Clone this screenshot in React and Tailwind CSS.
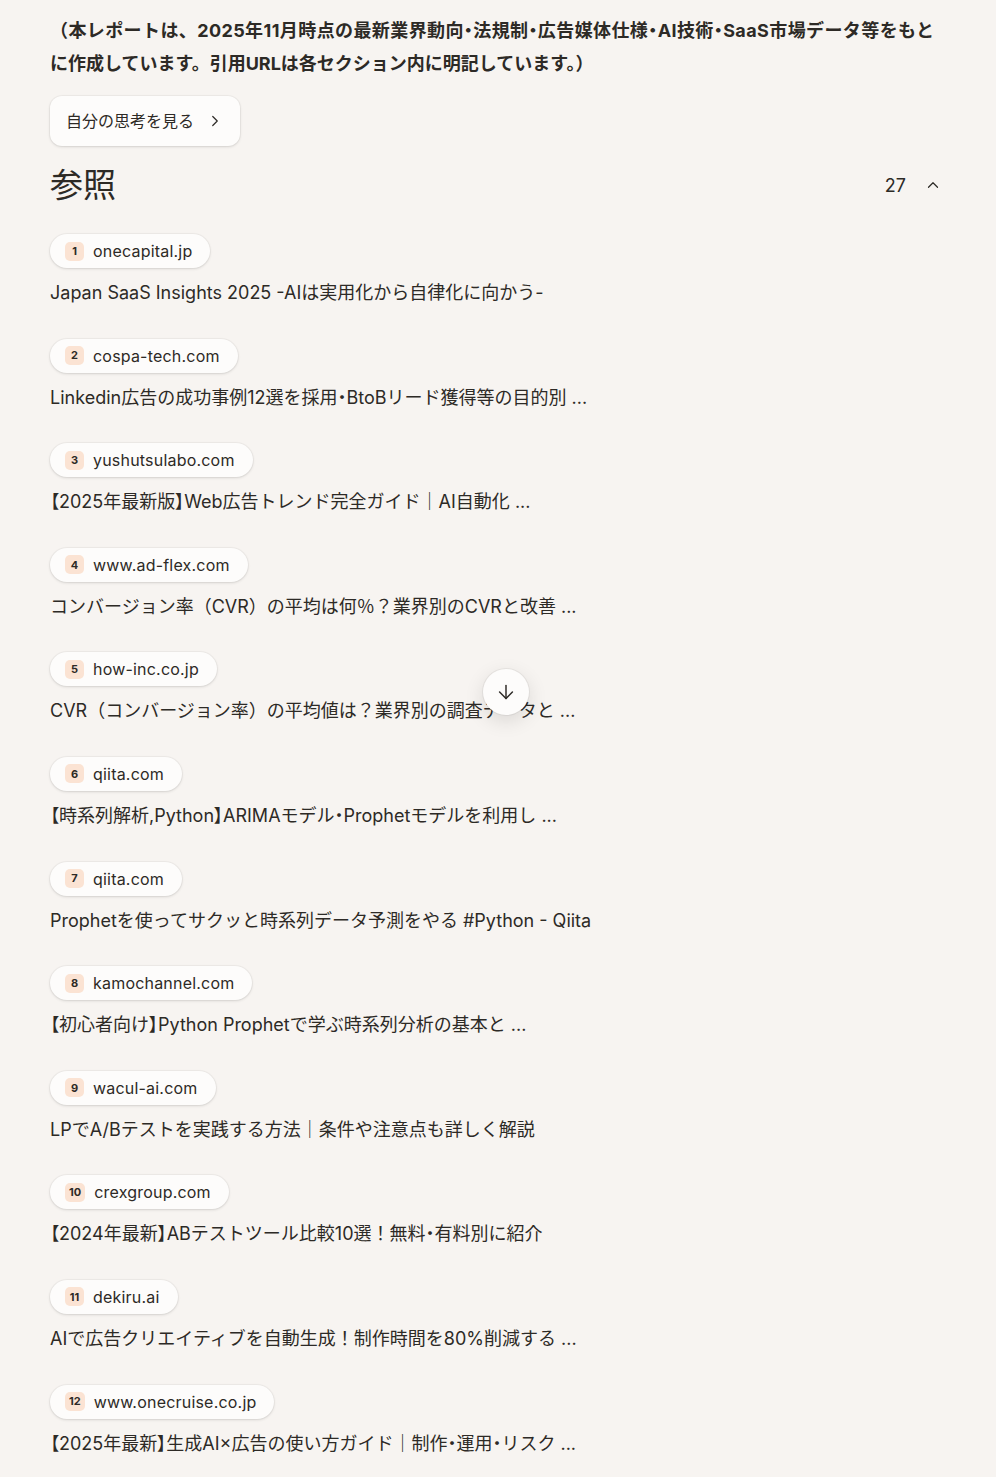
import React from "react";
import { ChevronRight, ChevronUp, ArrowDown } from "lucide-react";

const refs = [
  { n: 1, site: "onecapital.jp", title: "Japan SaaS Insights 2025 -AIは実用化から自律化に向かう-" },
  { n: 2, site: "cospa-tech.com", title: "Linkedin広告の成功事例12選を採用・BtoBリード獲得等の目的別 ..." },
  { n: 3, site: "yushutsulabo.com", title: "【2025年最新版】Web広告トレンド完全ガイド｜AI自動化 ..." },
  { n: 4, site: "www.ad-flex.com", title: "コンバージョン率（CVR）の平均は何％？業界別のCVRと改善 ..." },
  { n: 5, site: "how-inc.co.jp", title: "CVR（コンバージョン率）の平均値は？業界別の調査データと ..." },
  { n: 6, site: "qiita.com", title: "【時系列解析,Python】ARIMAモデル・Prophetモデルを利用し ..." },
  { n: 7, site: "qiita.com", title: "Prophetを使ってサクッと時系列データ予測をやる #Python - Qiita" },
  { n: 8, site: "kamochannel.com", title: "【初心者向け】Python Prophetで学ぶ時系列分析の基本と ..." },
  { n: 9, site: "wacul-ai.com", title: "LPでA/Bテストを実践する方法｜条件や注意点も詳しく解説" },
  { n: 10, site: "crexgroup.com", title: "【2024年最新】ABテストツール比較10選！無料・有料別に紹介" },
  { n: 11, site: "dekiru.ai", title: "AIで広告クリエイティブを自動生成！制作時間を80%削減する ..." },
  { n: 12, site: "www.onecruise.co.jp", title: "【2025年最新】生成AI×広告の使い方ガイド｜制作・運用・リスク ..." },
];

// ・ and 【】 are set proportionally in the original, the rest stays full width
function Jp({ text }) {
  return text.split(/([・【】])/).map((part, i) =>
    /^[・【】]$/.test(part) ? (
      <span key={i} className="[font-feature-settings:'palt']">
        {part}
      </span>
    ) : (
      part
    )
  );
}

function RefItem({ item }) {
  return (
    <div className="flex flex-col items-start">
      <div className="flex items-center h-[34px] pl-[15px] pr-[18px] rounded-full bg-[#fdfcfb] shadow-[0_1px_3px_rgba(0,0,0,0.12),0_0_0_1px_rgba(0,0,0,0.03)]">
        <span className="flex items-center justify-center min-w-[19px] h-[19px] px-[4px] rounded-[5px] bg-[#fbe3d3] text-[11px] font-bold text-[#2d2a26]">
          {item.n}
        </span>
        <span className="ml-[9px] text-[16px] tracking-[0.2px] text-[#2d2a26]">{item.site}</span>
      </div>
      <div className="mt-[12px] text-[18px] leading-[26px] text-[#2d2a26]">
        <Jp text={item.title} />
      </div>
    </div>
  );
}

export default function App() {
  return (
    <div
      className="min-h-screen bg-[#f7f4f1] text-[#2d2a26]"
      style={{ fontFamily: 'Inter, "Noto Sans CJK JP", sans-serif' }}
    >
      <div className="relative px-[50px] pt-[14px] pb-[20px]">
        <p className="text-[18px] leading-[33px] font-bold">
          <span className="tracking-[0.4px]">
            <Jp text="（本レポートは、2025年11月時点の最新業界動向・法規制・広告媒体仕様・AI技術・SaaS市場データ等をもと" />
          </span>
          <br />
          に作成しています。引用URLは各セクション内に明記しています。）
        </p>

        <button className="mt-[16px] flex items-center h-[50px] pl-[16px] pr-[16px] rounded-[12px] bg-[#fdfcfb] shadow-[0_1px_3px_rgba(0,0,0,0.12),0_0_0_1px_rgba(0,0,0,0.03)] text-[16px] text-[#2d2a26]">
          自分の思考を見る
          <ChevronRight className="ml-[12px] w-[18px] h-[18px]" strokeWidth={1.6} />
        </button>

        <div className="mt-[15px] flex items-center justify-between">
          <h2 className="text-[33px] leading-[48px] font-normal">参照</h2>
          <div className="flex items-center gap-[18px] pr-[4px]">
            <span className="text-[18px]">27</span>
            <ChevronUp className="w-[18px] h-[18px]" strokeWidth={1.6} />
          </div>
        </div>

        <div className="mt-[25px] flex flex-col gap-[32.6px]">
          {refs.map((r) => (
            <RefItem key={r.n} item={r} />
          ))}
        </div>

        <div className="absolute left-[483px] top-[669px] w-[46px] h-[46px] rounded-full bg-[#fdfcfb] flex items-center justify-center shadow-[0_6px_20px_rgba(0,0,0,0.12),0_0_0_1px_rgba(0,0,0,0.05)]">
          <ArrowDown className="w-[22px] h-[22px]" strokeWidth={1.6} />
        </div>
      </div>
    </div>
  );
}
